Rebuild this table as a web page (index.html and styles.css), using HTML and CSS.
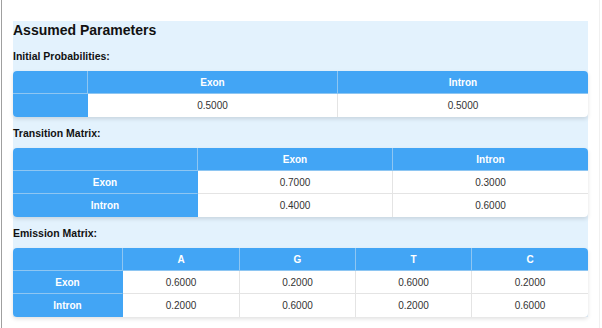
FILE: index.html
```html
<!DOCTYPE html>
<html>
<head>
<meta charset="utf-8">
<link rel="stylesheet" href="styles.css">
</head>
<body>
<div class="page">
  <section class="panel">
    <h3 class="title">Assumed Parameters</h3>

    <h4 class="label">Initial Probabilities:</h4>
    <table class="matrix t1">
      <colgroup><col class="c0"><col><col></colgroup>
      <thead>
        <tr><th></th><th>Exon</th><th>Intron</th></tr>
      </thead>
      <tbody>
        <tr><th></th><td>0.5000</td><td>0.5000</td></tr>
      </tbody>
    </table>

    <h4 class="label">Transition Matrix:</h4>
    <table class="matrix t2">
      <colgroup><col class="c0"><col><col></colgroup>
      <thead>
        <tr><th></th><th>Exon</th><th>Intron</th></tr>
      </thead>
      <tbody>
        <tr><th>Exon</th><td>0.7000</td><td>0.3000</td></tr>
        <tr><th>Intron</th><td>0.4000</td><td>0.6000</td></tr>
      </tbody>
    </table>

    <h4 class="label">Emission Matrix:</h4>
    <table class="matrix t3 last">
      <colgroup><col class="c0"><col class="c1"><col><col><col></colgroup>
      <thead>
        <tr><th></th><th>A</th><th>G</th><th>T</th><th>C</th></tr>
      </thead>
      <tbody>
        <tr><th>Exon</th><td>0.6000</td><td>0.2000</td><td>0.6000</td><td>0.2000</td></tr>
        <tr><th>Intron</th><td>0.2000</td><td>0.6000</td><td>0.2000</td><td>0.6000</td></tr>
      </tbody>
    </table>
  </section>
</div>
</body>
</html>
```

FILE: styles.css
```css
* { box-sizing: border-box; }

html, body {
  margin: 0;
  padding: 0;
  background: #ffffff;
  font-family: "Liberation Sans", Arial, sans-serif;
}

.page {
  margin-left: 1px;
  width: 599px;
  height: 328px;
  border-left: 1px solid #a0a0a0;
  border-right: 1px solid #f0f0f0;
  padding: 21px 0 0 11px;
  overflow: hidden;
}

.panel {
  width: 575px;
  background: #e3f2fd;
  padding-top: 1px;
}

.title {
  margin: 0 0 12px 0;
  font-size: 14px;
  line-height: 16px;
  font-weight: bold;
  color: #111;
}

.label {
  margin: 0 0 9px 0;
  font-size: 10.5px;
  line-height: 12px;
  font-weight: bold;
  color: #111;
}

.matrix {
  width: 575px;
  table-layout: fixed;
  border-collapse: separate;
  border-spacing: 0;
  background: #fff;
  border-radius: 4px;
  overflow: hidden;
  box-shadow: 0 2px 4px rgba(0, 0, 0, 0.12);
  margin-bottom: 10px;
  font-size: 10px;
}

.matrix.last { margin-bottom: 0; }

.matrix th,
.matrix td {
  height: 23px;
  padding: 0 4px;
  text-align: center;
  border-right: 1px solid #e4e4e4;
  border-bottom: 1px solid #e4e4e4;
}

.matrix tr > :last-child { border-right: none; }
.matrix tbody tr:last-child > * { border-bottom: none; }

.matrix th {
  background: #42a5f5;
  color: #fff;
  font-weight: bold;
}

.matrix thead th {
  border-right-color: #8ec6f2;
  border-bottom-color: #8ec6f2;
}

.matrix tbody th {
  border-right-color: #42a5f5;
  border-bottom-color: #8ec6f2;
}

.matrix td {
  color: #333;
}

.t1 .c0 { width: 75px; }
.t2 .c0 { width: 185px; }
.t3 .c0 { width: 110px; }
.t3 .c1 { width: 117px; }
```
